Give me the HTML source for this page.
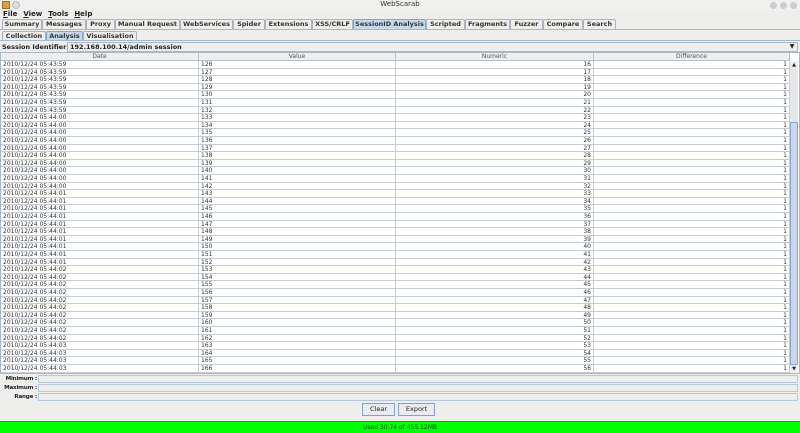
<!DOCTYPE html>
<html><head><meta charset="utf-8">
<style>
*{box-sizing:border-box;margin:0;padding:0}
body{width:800px;height:433px;overflow:hidden;background:#eeeeec;font-family:"DejaVu Sans","Liberation Sans",sans-serif;color:#222;position:relative}
.abs{position:absolute}
.title{top:0;left:0;width:800px;height:10px;background:#f2f0ee;font-size:7px;text-align:center;line-height:9px;color:#333}
.menu{top:10px;left:0;height:9px;font-size:7px;font-weight:bold;line-height:9px}
.menu span{margin-left:3px;margin-right:3px}
.tab{position:absolute;height:10px;border:1px solid #a8b4c4;border-bottom:none;background:#eeeeec;font-size:6.5px;font-weight:bold;text-align:center;line-height:9px;color:#333;border-radius:2px 2px 0 0;white-space:nowrap}
.tab.sel{background:#c8d8ec;border-color:#8aa6cc}
.tabline{left:0;width:800px;height:1px;background:#a8b8cc}
.row{position:absolute;left:1px;width:788px;height:7.6px;border-bottom:1px solid #c4ccd8;background:#fff;font-size:6px;line-height:7px;color:#333}
.row div{position:absolute;top:0;height:100%;border-right:1px solid #c4ccd8;padding:0 2px;white-space:nowrap}
.c1{left:0;width:198px}.c2{left:198px;width:197px}.c3{left:395px;width:198px;text-align:right}.c4{left:593px;width:196px;text-align:right}
.hdr{position:absolute;top:53px;left:1px;width:788px;height:8px;background:#eeeeec;border-bottom:1px solid #b8c0cc;font-size:6px;color:#555;line-height:8px}
.hdr div{position:absolute;top:0;height:8px;border-right:1px solid #b8c0cc;text-align:center}
.lbl{font-size:5.6px;font-weight:bold;text-align:right;width:37px;left:0;line-height:8px;white-space:nowrap;letter-spacing:-0.2px}
.fld{left:38px;width:760px;height:8px;border:1px solid #b8c8dc;background:#eeeeec}
.btn{height:13px;border:1px solid #8aa0c0;background:#e8ecf2;font-size:6.5px;text-align:center;line-height:11px;top:403px}
</style></head><body>
<div class="abs title">WebScarab</div>
<div class="abs" style="left:2px;top:1px;width:8px;height:8px;background:#d8a040;border:1px solid #a07020"></div>
<div class="abs" style="left:12px;top:1px;width:8px;height:8px;border-radius:50%;background:#ddd;border:1px solid #bbb"></div>
<div class="abs" style="left:770px;top:2px;width:7px;height:7px;border-radius:50%;background:#ccc"></div>
<div class="abs" style="left:780px;top:2px;width:7px;height:7px;border-radius:50%;background:#ccc"></div>
<div class="abs" style="left:790px;top:2px;width:7px;height:7px;border-radius:50%;background:#ccc"></div>
<div class="abs menu"><span><u>F</u>ile</span><span><u>V</u>iew</span><span><u>T</u>ools</span><span><u>H</u>elp</span></div>

<div class="tab" style="left:2px;top:19px;width:40px">Summary</div>
<div class="tab" style="left:42px;top:19px;width:44px">Messages</div>
<div class="tab" style="left:86px;top:19px;width:29px">Proxy</div>
<div class="tab" style="left:115px;top:19px;width:65px">Manual Request</div>
<div class="tab" style="left:180px;top:19px;width:53px">WebServices</div>
<div class="tab" style="left:233px;top:19px;width:32px">Spider</div>
<div class="tab" style="left:265px;top:19px;width:47px">Extensions</div>
<div class="tab" style="left:312px;top:19px;width:41px">XSS/CRLF</div>
<div class="tab sel" style="left:353px;top:19px;width:73px">SessionID Analysis</div>
<div class="tab" style="left:426px;top:19px;width:39px">Scripted</div>
<div class="tab" style="left:465px;top:19px;width:45px">Fragments</div>
<div class="tab" style="left:510px;top:19px;width:33px">Fuzzer</div>
<div class="tab" style="left:543px;top:19px;width:40px">Compare</div>
<div class="tab" style="left:583px;top:19px;width:33px">Search</div>
<div class="abs tabline" style="top:29px"></div>

<div class="tab" style="left:2px;top:31px;width:44px">Collection</div>
<div class="tab sel" style="left:46px;top:31px;width:37px">Analysis</div>
<div class="tab" style="left:83px;top:31px;width:54px">Visualisation</div>
<div class="abs tabline" style="top:40px"></div>

<div class="abs" style="left:2px;top:43px;font-size:6.5px;font-weight:bold;line-height:8px">Session Identifier :</div>
<div class="abs" style="left:67px;top:42px;width:731px;height:10px;border:1px solid #a8b8cc;background:#eeeeec;font-size:6.5px;font-weight:bold;line-height:8px;padding-left:2px">192.168.100.14/admin session</div>
<div class="abs" style="left:787px;top:43px;width:10px;height:8px;font-size:6px;text-align:center;line-height:8px">▼</div>

<div class="abs" style="left:0;top:52px;width:800px;height:322px;border:1px solid #a8b8cc;background:#fff"></div>
<div class="hdr"><div style="left:0;width:198px">Date</div><div style="left:198px;width:197px">Value</div><div style="left:395px;width:198px">Numeric</div><div style="left:593px;width:196px">Difference</div></div>

<div id="rows">
<div class="row" style="top:61.0px"><div class="c1">2010/12/24 05:43:59</div><div class="c2">126</div><div class="c3">16</div><div class="c4">1</div></div>
<div class="row" style="top:68.6px"><div class="c1">2010/12/24 05:43:59</div><div class="c2">127</div><div class="c3">17</div><div class="c4">1</div></div>
<div class="row" style="top:76.2px"><div class="c1">2010/12/24 05:43:59</div><div class="c2">128</div><div class="c3">18</div><div class="c4">1</div></div>
<div class="row" style="top:83.8px"><div class="c1">2010/12/24 05:43:59</div><div class="c2">129</div><div class="c3">19</div><div class="c4">1</div></div>
<div class="row" style="top:91.4px"><div class="c1">2010/12/24 05:43:59</div><div class="c2">130</div><div class="c3">20</div><div class="c4">1</div></div>
<div class="row" style="top:99.0px"><div class="c1">2010/12/24 05:43:59</div><div class="c2">131</div><div class="c3">21</div><div class="c4">1</div></div>
<div class="row" style="top:106.6px"><div class="c1">2010/12/24 05:43:59</div><div class="c2">132</div><div class="c3">22</div><div class="c4">1</div></div>
<div class="row" style="top:114.2px"><div class="c1">2010/12/24 05:44:00</div><div class="c2">133</div><div class="c3">23</div><div class="c4">1</div></div>
<div class="row" style="top:121.8px"><div class="c1">2010/12/24 05:44:00</div><div class="c2">134</div><div class="c3">24</div><div class="c4">1</div></div>
<div class="row" style="top:129.4px"><div class="c1">2010/12/24 05:44:00</div><div class="c2">135</div><div class="c3">25</div><div class="c4">1</div></div>
<div class="row" style="top:137.0px"><div class="c1">2010/12/24 05:44:00</div><div class="c2">136</div><div class="c3">26</div><div class="c4">1</div></div>
<div class="row" style="top:144.6px"><div class="c1">2010/12/24 05:44:00</div><div class="c2">137</div><div class="c3">27</div><div class="c4">1</div></div>
<div class="row" style="top:152.2px"><div class="c1">2010/12/24 05:44:00</div><div class="c2">138</div><div class="c3">28</div><div class="c4">1</div></div>
<div class="row" style="top:159.8px"><div class="c1">2010/12/24 05:44:00</div><div class="c2">139</div><div class="c3">29</div><div class="c4">1</div></div>
<div class="row" style="top:167.4px"><div class="c1">2010/12/24 05:44:00</div><div class="c2">140</div><div class="c3">30</div><div class="c4">1</div></div>
<div class="row" style="top:175.0px"><div class="c1">2010/12/24 05:44:00</div><div class="c2">141</div><div class="c3">31</div><div class="c4">1</div></div>
<div class="row" style="top:182.6px"><div class="c1">2010/12/24 05:44:00</div><div class="c2">142</div><div class="c3">32</div><div class="c4">1</div></div>
<div class="row" style="top:190.2px"><div class="c1">2010/12/24 05:44:01</div><div class="c2">143</div><div class="c3">33</div><div class="c4">1</div></div>
<div class="row" style="top:197.8px"><div class="c1">2010/12/24 05:44:01</div><div class="c2">144</div><div class="c3">34</div><div class="c4">1</div></div>
<div class="row" style="top:205.4px"><div class="c1">2010/12/24 05:44:01</div><div class="c2">145</div><div class="c3">35</div><div class="c4">1</div></div>
<div class="row" style="top:213.0px"><div class="c1">2010/12/24 05:44:01</div><div class="c2">146</div><div class="c3">36</div><div class="c4">1</div></div>
<div class="row" style="top:220.6px"><div class="c1">2010/12/24 05:44:01</div><div class="c2">147</div><div class="c3">37</div><div class="c4">1</div></div>
<div class="row" style="top:228.2px"><div class="c1">2010/12/24 05:44:01</div><div class="c2">148</div><div class="c3">38</div><div class="c4">1</div></div>
<div class="row" style="top:235.8px"><div class="c1">2010/12/24 05:44:01</div><div class="c2">149</div><div class="c3">39</div><div class="c4">1</div></div>
<div class="row" style="top:243.4px"><div class="c1">2010/12/24 05:44:01</div><div class="c2">150</div><div class="c3">40</div><div class="c4">1</div></div>
<div class="row" style="top:251.0px"><div class="c1">2010/12/24 05:44:01</div><div class="c2">151</div><div class="c3">41</div><div class="c4">1</div></div>
<div class="row" style="top:258.6px"><div class="c1">2010/12/24 05:44:01</div><div class="c2">152</div><div class="c3">42</div><div class="c4">1</div></div>
<div class="row" style="top:266.2px"><div class="c1">2010/12/24 05:44:02</div><div class="c2">153</div><div class="c3">43</div><div class="c4">1</div></div>
<div class="row" style="top:273.8px"><div class="c1">2010/12/24 05:44:02</div><div class="c2">154</div><div class="c3">44</div><div class="c4">1</div></div>
<div class="row" style="top:281.4px"><div class="c1">2010/12/24 05:44:02</div><div class="c2">155</div><div class="c3">45</div><div class="c4">1</div></div>
<div class="row" style="top:289.0px"><div class="c1">2010/12/24 05:44:02</div><div class="c2">156</div><div class="c3">46</div><div class="c4">1</div></div>
<div class="row" style="top:296.6px"><div class="c1">2010/12/24 05:44:02</div><div class="c2">157</div><div class="c3">47</div><div class="c4">1</div></div>
<div class="row" style="top:304.2px"><div class="c1">2010/12/24 05:44:02</div><div class="c2">158</div><div class="c3">48</div><div class="c4">1</div></div>
<div class="row" style="top:311.8px"><div class="c1">2010/12/24 05:44:02</div><div class="c2">159</div><div class="c3">49</div><div class="c4">1</div></div>
<div class="row" style="top:319.4px"><div class="c1">2010/12/24 05:44:02</div><div class="c2">160</div><div class="c3">50</div><div class="c4">1</div></div>
<div class="row" style="top:327.0px"><div class="c1">2010/12/24 05:44:02</div><div class="c2">161</div><div class="c3">51</div><div class="c4">1</div></div>
<div class="row" style="top:334.6px"><div class="c1">2010/12/24 05:44:02</div><div class="c2">162</div><div class="c3">52</div><div class="c4">1</div></div>
<div class="row" style="top:342.2px"><div class="c1">2010/12/24 05:44:03</div><div class="c2">163</div><div class="c3">53</div><div class="c4">1</div></div>
<div class="row" style="top:349.8px"><div class="c1">2010/12/24 05:44:03</div><div class="c2">164</div><div class="c3">54</div><div class="c4">1</div></div>
<div class="row" style="top:357.4px"><div class="c1">2010/12/24 05:44:03</div><div class="c2">165</div><div class="c3">55</div><div class="c4">1</div></div>
<div class="row" style="top:365.0px"><div class="c1">2010/12/24 05:44:03</div><div class="c2">166</div><div class="c3">56</div><div class="c4">1</div></div>
</div>

<div class="abs" style="left:789px;top:61px;width:9px;height:312px;background:#e4e6ea;border-left:1px solid #c4ccd8"></div>
<div class="abs" style="left:790px;top:61px;width:8px;height:8px;font-size:5px;text-align:center;line-height:8px;background:#eeeeec">▲</div>
<div class="abs" style="left:790px;top:122px;width:8px;height:243px;background:#c8d8ec;border:1px solid #8aa6cc"></div>
<div class="abs" style="left:790px;top:365px;width:8px;height:8px;font-size:5px;text-align:center;line-height:8px;background:#eeeeec">▼</div>

<div class="abs lbl" style="top:375px">Minimum :</div>
<div class="abs fld" style="top:375px"></div>
<div class="abs lbl" style="top:384px">Maximum :</div>
<div class="abs fld" style="top:384px"></div>
<div class="abs lbl" style="top:393px">Range :</div>
<div class="abs fld" style="top:393px"></div>

<div class="abs btn" style="left:362px;width:33px">Clear</div>
<div class="abs btn" style="left:398px;width:37px">Export</div>

<div class="abs" style="left:0;top:421px;width:800px;height:12px;background:#00ff00;border-top:1px solid #00b000;font-size:6px;text-align:center;line-height:11px;color:#114411">Used 30.74 of 455.12MB</div>
</body></html>
